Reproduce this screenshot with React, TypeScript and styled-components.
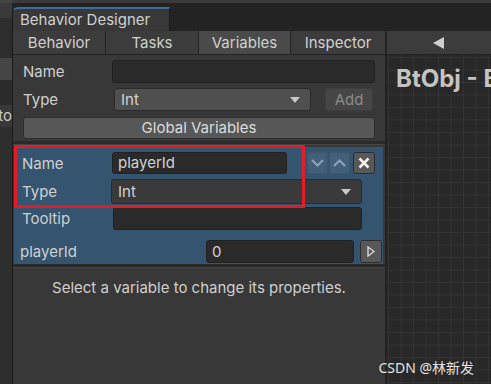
import React from 'react';
import styled, { createGlobalStyle } from 'styled-components';

const GlobalStyle = createGlobalStyle`
  html, body {
    margin: 0;
    padding: 0;
    background: #282828;
  }
  body {
    font-family: Inter, "Noto Sans", "Liberation Sans", sans-serif;
    font-size: 15px;
    color: #d2d2d2;
  }
`;

const Screen = styled.div`
  position: relative;
  width: 491px;
  height: 384px;
  overflow: hidden;
  display: flex;
  background: #282828;
`;

const SideStrip = styled.div`
  width: 12px;
  flex-shrink: 0;
  display: flex;
  flex-direction: column;
  overflow: hidden;
`;

const StripPart = styled.div<{ $h: number; $bg: string }>`
  height: ${(p) => p.$h}px;
  flex-shrink: 0;
  background: ${(p) => p.$bg};
  color: #c8c8c8;
  font-size: 15px;
  line-height: ${(p) => p.$h}px;
  white-space: nowrap;
  display: flex;
  justify-content: flex-end;
`;

const StripRest = styled.div`
  flex: 1;
  background: #2e2e2e;
`;

const Main = styled.div`
  flex: 1;
  display: flex;
  flex-direction: column;
  min-width: 0;
`;

const TitleBar = styled.div`
  height: 31px;
  display: flex;
  align-items: flex-end;
  background: #232323;
  border-top: 3px solid #3a3a3a;
  box-sizing: border-box;
`;

const TitleTab = styled.div`
  width: 158px;
  height: 24px;
  box-sizing: border-box;
  background: #383838;
  border-top: 2px solid #3d6c9b;
  border-left: 1px solid #1b1b1b;
  border-right: 1px solid #1b1b1b;
  border-top-left-radius: 6px;
  padding-left: 7px;
  font-size: 15px;
  line-height: 21px;
  color: #d0d0d0;
  white-space: nowrap;
`;

const Body = styled.div`
  flex: 1;
  display: flex;
  min-height: 0;
`;

const LeftPanel = styled.div`
  width: 375px;
  flex-shrink: 0;
  display: flex;
  flex-direction: column;
  background: #383838;
  border-left: 1px solid #1b1b1b;
  border-right: 2px solid #232323;
  box-sizing: border-box;
`;

const TabRow = styled.div`
  height: 24px;
  display: grid;
  grid-template-columns: 93px 93px 92px 1fr;
  border-bottom: 1px solid #232323;
  box-sizing: border-box;
`;

const Tab = styled.div<{ $active?: boolean }>`
  background: ${(p) => (p.$active ? '#4a4a4a' : '#3c3c3c')};
  border-right: 1px solid #232323;
  text-align: center;
  line-height: 23px;
  color: #d0d0d0;
  font-size: 15px;
  &:last-child {
    border-right: none;
  }
`;

const Section = styled.div`
  padding: 5px 10px 0 10px;
  display: flex;
  flex-direction: column;
  gap: 5px;
`;

const Row = styled.div`
  display: flex;
  align-items: center;
  height: 23px;
`;

const Label = styled.div<{ $w?: number }>`
  width: ${(p) => p.$w ?? 89}px;
  flex-shrink: 0;
  color: #d0d0d0;
  font-size: 15px;
`;

const TextBox = styled.div<{ $w?: number; $h?: number }>`
  ${(p) => (p.$w ? `width: ${p.$w}px;` : 'flex: 1;')}
  flex-shrink: 0;
  height: ${(p) => p.$h ?? 23}px;
  box-sizing: border-box;
  background: #2a2a2a;
  border: 1px solid #212121;
  border-radius: 3px;
  padding-left: 5px;
  line-height: ${(p) => (p.$h ?? 23) - 2}px;
  color: #d2d2d2;
  font-size: 15px;
`;

const Dropdown = styled.div<{ $w?: number; $h?: number; $bg?: string }>`
  ${(p) => (p.$w ? `width: ${p.$w}px;` : 'flex: 1;')}
  flex-shrink: 0;
  height: ${(p) => p.$h ?? 23}px;
  box-sizing: border-box;
  background: ${(p) => p.$bg ?? '#4f4f4f'};
  border: 1px solid #2a2a2a;
  border-radius: 3px;
  padding: 0 10px 0 6px;
  display: flex;
  align-items: center;
  justify-content: space-between;
  color: #d2d2d2;
  font-size: 15px;
`;

const Caret = styled.span`
  width: 0;
  height: 0;
  border-left: 5px solid transparent;
  border-right: 5px solid transparent;
  border-top: 6px solid #c8c8c8;
`;

const Button = styled.div<{ $disabled?: boolean }>`
  height: 23px;
  box-sizing: border-box;
  background: ${(p) => (p.$disabled ? '#464646' : '#575757')};
  border: 1px solid ${(p) => (p.$disabled ? '#3e3e3e' : '#2e2e2e')};
  border-radius: 3px;
  color: ${(p) => (p.$disabled ? '#8a8a8a' : '#dcdcdc')};
  text-align: center;
  line-height: 21px;
  font-size: 15px;
`;

const AddButton = styled(Button)`
  width: 48px;
  margin-left: 14px;
`;

const WideButton = styled(Button)`
  height: 22px;
  line-height: 20px;
  margin-top: 1px;
`;

const Divider = styled.div<{ $mt?: number }>`
  height: 3px;
  margin: ${(p) => p.$mt ?? 3}px 0 1px;
  background: #2a2a2a;
  border-bottom: 1px solid #454545;
`;

const VarBlock = styled.div`
  position: relative;
  margin: 1px 2px 0 1px;
  background: #34546f;
  padding: 5px 0 1px 8px;
  display: flex;
  flex-direction: column;
`;

const VarRow = styled.div<{ $h: number; $mt?: number }>`
  display: flex;
  align-items: center;
  height: ${(p) => p.$h}px;
  margin-top: ${(p) => p.$mt ?? 0}px;
`;

const IconBtn = styled.div<{ $muted?: boolean; $w?: number }>`
  width: ${(p) => p.$w ?? 21}px;
  height: 22px;
  box-sizing: border-box;
  border-radius: 3px;
  background: ${(p) => (p.$muted ? '#446079' : '#585858')};
  border: 1px solid ${(p) => (p.$muted ? '#3b566d' : '#2c2c2c')};
  display: flex;
  align-items: center;
  justify-content: center;
  margin-left: 1px;
`;

const Highlight = styled.div`
  position: absolute;
  left: 0;
  top: -2px;
  width: 291px;
  height: 63px;
  box-sizing: border-box;
  border: 3px solid #e21d27;
  pointer-events: none;
`;

const Hint = styled.div`
  margin-top: 9px;
  text-align: center;
  color: #cfcfcf;
  font-size: 15px;
`;

const RightPanel = styled.div`
  flex: 1;
  display: flex;
  flex-direction: column;
  min-width: 0;
  overflow: hidden;
`;

const RightHeader = styled.div`
  height: 24px;
  box-sizing: border-box;
  background: #3c3c3c;
  border-bottom: 1px solid #232323;
  display: flex;
  align-items: center;
  justify-content: center;
  padding-right: 2px;
`;

const LeftArrow = styled.span`
  width: 0;
  height: 0;
  border-top: 6px solid transparent;
  border-bottom: 6px solid transparent;
  border-right: 11px solid #cfcfcf;
`;

const Canvas = styled.div`
  flex: 1;
  background-color: #282828;
  background-image:
    linear-gradient(to right, #333 1px, transparent 1px),
    linear-gradient(to bottom, #333 1px, transparent 1px);
  background-size: 12.5px 12.5px;
  background-position: 1px 2px;
  padding: 9px 0 0 9px;
`;

const GraphTitle = styled.div`
  font-size: 24px;
  font-weight: 700;
  color: #c4c4c4;
  white-space: nowrap;
`;

const Watermark = styled.div`
  position: absolute;
  right: 17px;
  bottom: 7px;
  font-family: "Noto Sans", "Noto Sans CJK SC", sans-serif;
  font-size: 14px;
  color: #e4e4e4;
  text-shadow: 0 0 1px #222;
`;

const Chevron = ({ up }: { up?: boolean }) => (
  <svg width="15" height="10" viewBox="0 0 15 10">
    <path
      d={up ? 'M2 8 L7.5 2.5 L13 8' : 'M2 2 L7.5 7.5 L13 2'}
      stroke="#8aa3b8"
      strokeWidth="2.2"
      fill="none"
    />
  </svg>
);

const Cross = () => (
  <svg width="12" height="12" viewBox="0 0 12 12">
    <path d="M1.5 1.5 L10.5 10.5 M10.5 1.5 L1.5 10.5" stroke="#f0f0f0" strokeWidth="2.6" />
  </svg>
);

const PlayArrow = () => (
  <svg width="8" height="11" viewBox="0 0 8 11">
    <path d="M1 1 L7 5.5 L1 10 Z" fill="none" stroke="#d8d8d8" strokeWidth="1.4" />
  </svg>
);

const App: React.FC = () => {
  return (
    <>
      <GlobalStyle />
      <Screen>
        <SideStrip>
          <StripPart $h={3} $bg="#444" />
          <StripPart $h={15} $bg="#3a3a3a" />
          <StripPart $h={40} $bg="#2d2d2d" />
          <StripPart $h={22} $bg="#454545" />
          <StripPart $h={25} $bg="#2b2b2b" />
          <StripPart $h={22} $bg="#383838">to</StripPart>
          <StripRest />
        </SideStrip>
        <Main>
          <TitleBar>
            <TitleTab>Behavior Designer</TitleTab>
          </TitleBar>
          <Body>
            <LeftPanel>
              <TabRow>
                <Tab>Behavior</Tab>
                <Tab>Tasks</Tab>
                <Tab $active>Variables</Tab>
                <Tab>Inspector</Tab>
              </TabRow>
              <Section>
                <Row>
                  <Label>Name</Label>
                  <TextBox />
                </Row>
                <Row>
                  <Label $w={91}>Type</Label>
                  <Dropdown $w={197}>
                    Int
                    <Caret />
                  </Dropdown>
                  <AddButton $disabled>Add</AddButton>
                </Row>
                <WideButton>Global Variables</WideButton>
              </Section>
              <Divider $mt={2} />
              <VarBlock>
                <Highlight />
                <VarRow $h={22}>
                  <Label $w={90}>Name</Label>
                  <TextBox $w={175} $h={22}>playerId</TextBox>
                  <IconBtn $muted style={{ marginLeft: 20 }}>
                    <Chevron />
                  </IconBtn>
                  <IconBtn $muted>
                    <Chevron up />
                  </IconBtn>
                  <IconBtn $w={22} style={{ marginLeft: 3 }}>
                    <Cross />
                  </IconBtn>
                </VarRow>
                <VarRow $h={25} $mt={5}>
                  <Label $w={89}>Type</Label>
                  <Dropdown $w={251} $h={25} $bg="#3a3a3a">
                    Int
                    <Caret />
                  </Dropdown>
                </VarRow>
                <VarRow $h={23} $mt={3}>
                  <Label $w={91}>Tooltip</Label>
                  <TextBox $w={249} />
                </VarRow>
                <VarRow $h={23} $mt={10}>
                  <Label $w={186} style={{ marginLeft: -2 }}>playerId</Label>
                  <TextBox $w={148} $h={23}>0</TextBox>
                  <IconBtn $w={22} style={{ marginLeft: 6, height: 23 }}>
                    <PlayArrow />
                  </IconBtn>
                </VarRow>
              </VarBlock>
              <Divider $mt={0} />
              <Hint>Select a variable to change its properties.</Hint>
            </LeftPanel>
            <RightPanel>
              <RightHeader>
                <LeftArrow />
              </RightHeader>
              <Canvas>
                <GraphTitle>BtObj - Behavior</GraphTitle>
              </Canvas>
            </RightPanel>
          </Body>
        </Main>
        <Watermark>CSDN @林新发</Watermark>
      </Screen>
    </>
  );
};

export default App;
